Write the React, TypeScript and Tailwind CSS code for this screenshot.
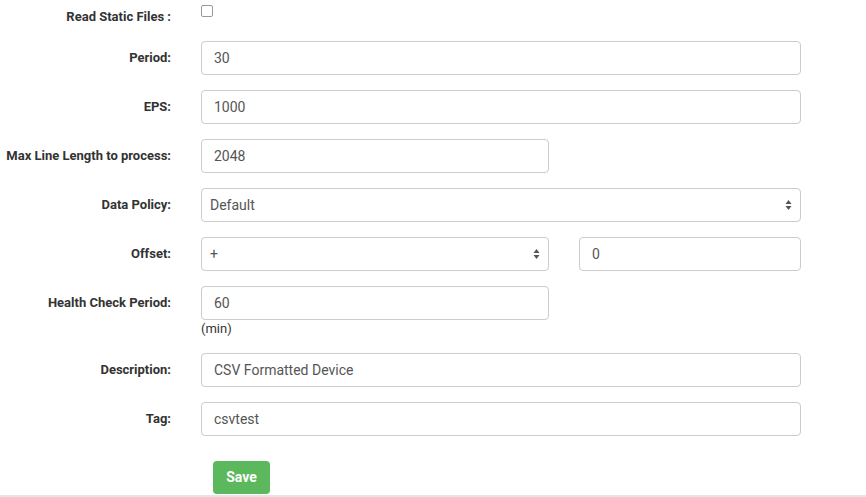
import React from "react";

const Arrows = () => (
  <svg width="7" height="11" viewBox="0 0 7 11" className="absolute right-[8px] top-1/2 -translate-y-1/2">
    <path d="M3.5 0.5 L6.5 4.5 L0.5 4.5 Z" fill="#555" />
    <path d="M3.5 10.5 L6.5 6.5 L0.5 6.5 Z" fill="#555" />
  </svg>
);

const Label = ({ children }: { children: React.ReactNode }) => (
  <div className="w-[171px] shrink-0 text-right pt-[7px] text-[13px] leading-[20px] font-bold text-[#333]">{children}</div>
);

const Input = ({ value, w }: { value: string; w: string }) => (
  <div className={`${w} h-[34px] border border-[#ccc] rounded-[4px] flex items-center pl-[12px] text-[14px] text-[#555]`}>{value}</div>
);

const Select = ({ value, w }: { value: string; w: string }) => (
  <div className={`${w} relative h-[34px] border border-[#ccc] rounded-[4px] flex items-center pl-[8px] text-[14px] text-[#555]`}>
    {value}
    <Arrows />
  </div>
);

export default function App() {
  return (
    <div className="w-[866px] h-[497px] bg-white overflow-hidden flex flex-col" style={{ fontFamily: "Roboto, 'Liberation Sans', sans-serif" }}>
      <div className="flex h-[26px] mb-[15px]">
        <Label>Read Static Files :</Label>
        <div className="ml-[30px] pt-[5px]">
          <div className="w-[12px] h-[12px] border border-[#999] rounded-[2px] bg-white" />
        </div>
      </div>
      <div className="flex mb-[15px]">
        <Label>Period:</Label>
        <div className="ml-[30px]"><Input value="30" w="w-[600px]" /></div>
      </div>
      <div className="flex mb-[15px]">
        <Label>EPS:</Label>
        <div className="ml-[30px]"><Input value="1000" w="w-[600px]" /></div>
      </div>
      <div className="flex mb-[15px]">
        <Label>Max Line Length to process:</Label>
        <div className="ml-[30px]"><Input value="2048" w="w-[348px]" /></div>
      </div>
      <div className="flex mb-[15px]">
        <Label>Data Policy:</Label>
        <div className="ml-[30px]"><Select value="Default" w="w-[600px]" /></div>
      </div>
      <div className="flex mb-[15px]">
        <Label>Offset:</Label>
        <div className="ml-[30px] flex gap-[30px]">
          <Select value="+" w="w-[348px]" />
          <Input value="0" w="w-[222px]" />
        </div>
      </div>
      <div className="flex mb-[15px]">
        <Label>Health Check Period:</Label>
        <div className="ml-[30px]">
          <Input value="60" w="w-[348px]" />
          <div className="text-[13px] leading-[18px] text-[#333]">(min)</div>
        </div>
      </div>
      <div className="flex mb-[15px]">
        <Label>Description:</Label>
        <div className="ml-[30px]"><Input value="CSV Formatted Device" w="w-[600px]" /></div>
      </div>
      <div className="flex">
        <Label>Tag:</Label>
        <div className="ml-[30px]"><Input value="csvtest" w="w-[600px]" /></div>
      </div>
      <div className="flex mt-[25px]">
        <div className="ml-[213px] w-[57px] h-[33px] bg-[#5cb85c] rounded-[4px] flex items-center justify-center text-white font-bold text-[14px]">Save</div>
      </div>
      <div className="mt-[1px] border-t-2 border-[#e5e5e5]" />
    </div>
  );
}
